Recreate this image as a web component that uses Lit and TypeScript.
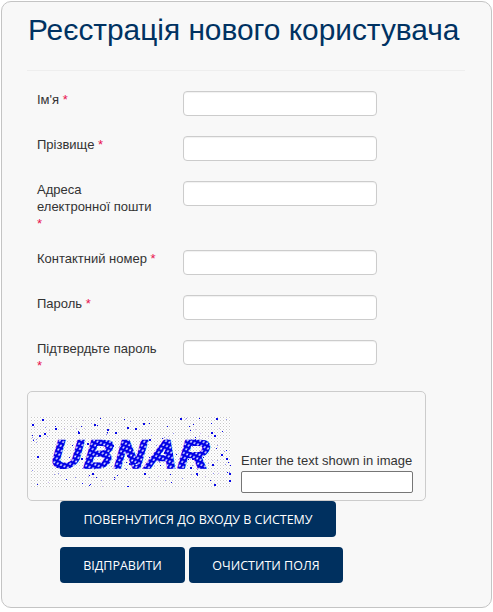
import { LitElement, html, css, svg } from "lit";
import { customElement } from "lit/decorators.js";

function noise() {
  let s = 12345;
  const r = () => ((s = (s * 1103515245 + 12345) & 0x7fffffff) / 0x7fffffff);
  const out = [];
  for (let i = 0; i < 210; i++) {
    const x = r() * 200, y = r() * 70, big = r();
    const size = big > 0.78 ? 2 : 1;
    const fill = big > 0.5 ? "#0a0ae6" : big > 0.25 ? "#8f8fee" : "#c9b8ee";
    out.push(svg`<rect x=${x.toFixed(0)} y=${y.toFixed(0)} width=${size} height=${size} fill=${fill}></rect>`);
  }
  return out;
}

const FIELDS: [string, string][] = [
  ["Ім'я", "one"],
  ["Прізвище", "one"],
  ["Адреса електронної пошти", "three"],
  ["Контактний номер", "one"],
  ["Пароль", "one"],
  ["Підтвердьте пароль", "two"],
];

@customElement("app-root")
export class AppRoot extends LitElement {
  static styles = css`
    :host { display: block; width: 493px; height: 612px; background: #fff; font-family: "Liberation Sans", Arial, sans-serif; overflow: hidden; }
    * { box-sizing: border-box; }
    .card { width: 491px; height: 607px; margin: 1px 0 0 1px; background: #f8f8f8; border: 1px solid #c4c4c4; border-radius: 10px; padding: 11px 25px 0 25px; }
    h1 { margin: 0 0 0 1px; font-size: 29.85px; line-height: 34px; font-weight: 400; color: #003262; white-space: nowrap; }
    hr { margin: 23px 0 20px 0; border: 0; border-top: 1px solid #eee; width: 438px; }
    .row { display: grid; grid-template-columns: 146px 194px; align-items: start; padding-left: 10px; }
    .row.one { height: 45px; }
    .row.three { height: 69px; }
    .row.two { height: 51px; }
    label { display: block; font-size: 13px; line-height: 17px; color: #333; width: 120px; margin-top: 0; }
    label i { font-style: normal; color: #e8124f; }
    .input { display: block; width: 194px; height: 25px; background: #fff; border: 1px solid #ccc; border-radius: 4px; box-shadow: inset 0 1px 1px rgba(0,0,0,.06); padding: 0; margin: 0; }
    .captcha { width: 399px; height: 110px; border: 1px solid #ccc; border-radius: 5px; display: flex; align-items: flex-end; padding: 0 0 7px 3px; gap: 10px; }
    .captcha svg { display: block; margin-bottom: 6px; }
    .cap-side { width: 172px; }
    .cap-side span { display: block; font-size: 13px; line-height: 15px; color: #333; white-space: nowrap; margin-bottom: 3px; }
    .cap-side input { display: block; width: 172px; height: 22px; border: 1px solid #767676; border-radius: 2px; background: #fff; padding: 0; }
    .buttons { margin-left: 33px; display: flex; flex-direction: column; gap: 10px; }
    .btn-row { display: flex; gap: 4px; }
    button { height: 36px; background: #00305f; color: #fff; border: 0; border-radius: 4px; font-family: "Open Sans", sans-serif; font-size: 12.5px; padding: 1px 0 0; text-transform: uppercase; display: block; }
    .back { width: 276px; }
    .send { width: 125px; }
    .clear { width: 154px; }
  `;

  render() {
    return html`
      <div class="card">
        <h1>Реєстрація нового користувача</h1>
        <hr />
        ${FIELDS.map(([t, c]) => html`
          <div class="row ${c}">
            <label>${t} <i>*</i></label>
            <input class="input" type="text" />
          </div>`)}
        <div class="captcha">
          <svg width="200" height="70" viewBox="0 0 200 70">
            <defs>
              <pattern id="bg" width="3" height="3" patternUnits="userSpaceOnUse">
                <rect width="1" height="1" fill="#c8c8c8"></rect>
                <rect x="1.5" y="1.5" width="1" height="1" fill="#dcdcdc"></rect>
              </pattern>
              <pattern id="ink" width="4" height="4" patternUnits="userSpaceOnUse" patternTransform="rotate(20)">
                <rect width="4" height="4" fill="#0000e6"></rect>
                <rect x="1.2" y="1.2" width="1.8" height="1.8" fill="#e8e8ff"></rect>
              </pattern>
            </defs>
            <rect width="200" height="70" fill="#fff"></rect>
            <rect width="200" height="70" fill="url(#bg)"></rect>
            ${noise()}
            <g transform="translate(18 50) skewX(-16)">
              <text x="0" y="0" font-family="Liberation Sans" font-size="37" font-weight="400" letter-spacing="3"
                textLength="160" lengthAdjust="spacingAndGlyphs" fill="none" stroke="url(#ink)" stroke-width="3.4">UBNAR</text>
            </g>
          </svg>
          <div class="cap-side">
            <span>Enter the text shown in image</span>
            <input type="text" />
          </div>
        </div>
        <div class="buttons">
          <div class="btn-row"><button class="back">Повернутися до входу в систему</button></div>
          <div class="btn-row">
            <button class="send">Відправити</button>
            <button class="clear">Очистити поля</button>
          </div>
        </div>
      </div>`;
  }
}
